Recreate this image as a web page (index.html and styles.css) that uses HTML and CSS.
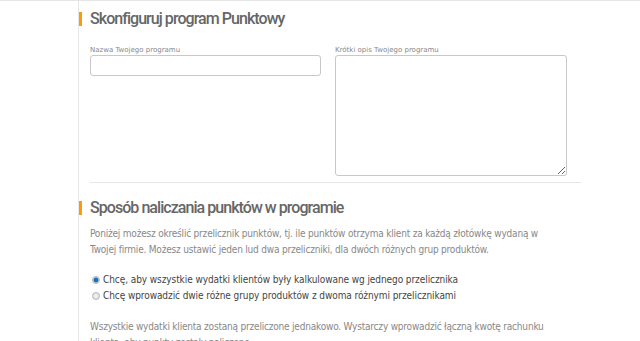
FILE: index.html
```html
<!DOCTYPE html>
<html lang="pl">

<head>
    <meta charset="UTF-8">
    <meta name="viewport" content="width=device-width, initial-scale=1.0">
    <title>Program Punktowy</title>
    <link rel="stylesheet" href="styles.css">
</head>

<body>
    <div class="page">
        <div class="side"></div>
        <div class="main">
            <h2 class="section-title">Skonfiguruj program Punktowy</h2>
            <div class="form-row">
                <div class="field">
                    <label for="name">Nazwa Twojego programu</label>
                    <input type="text" id="name">
                </div>
                <div class="field">
                    <label for="desc">Krótki opis Twojego programu</label>
                    <textarea id="desc"></textarea>
                </div>
            </div>
            <hr class="divider">
            <h2 class="section-title second">Sposób naliczania punktów w programie</h2>
            <p class="info">Poniżej możesz określić przelicznik punktów, tj. ile punktów otrzyma klient za każdą złotówkę wydaną w Twojej firmie. Możesz ustawić jeden lud dwa przeliczniki, dla dwóch różnych grup produktów.</p>
            <div class="options">
                <label class="option"><input type="radio" name="mode" checked>Chcę, aby wszystkie wydatki klientów były kalkulowane wg jednego przelicznika</label>
                <label class="option"><input type="radio" name="mode">Chcę wprowadzić dwie różne grupy produktów z dwoma różnymi przelicznikami</label>
            </div>
            <p class="info">Wszystkie wydatki klienta zostaną przeliczone jednakowo. Wystarczy wprowadzić łączną kwotę rachunku klienta, aby punkty zostały naliczone.</p>
        </div>
    </div>
</body>

</html>
```

FILE: styles.css
```css
body {
    margin: 0;
    font-family: "DejaVu Sans Condensed", "DejaVu Sans", Verdana, sans-serif;
    font-stretch: condensed;
    background-color: #fff;
    overflow: hidden;
}

.page {
    display: flex;
    border-top: 1px solid #e6e6e6;
    height: 340px;
}

.side {
    width: 78px;
    flex-shrink: 0;
}

.main {
    border-left: 1px solid #e6e6e6;
    padding-left: 11px;
    width: 491px;
}

.section-title {
    margin: 11px 0 0 -11px;
    padding-left: 8px;
    border-left: 3px solid #ff9a00;
    font-family: Roboto, sans-serif;
    font-stretch: normal;
    font-weight: 500;
    font-size: 16px;
    letter-spacing: -0.95px;
    line-height: 14px;
    height: 14px;
    color: #666;
}

.section-title.second {
    margin-top: 18px;
}

.form-row {
    display: flex;
    gap: 14px;
    margin-top: 20px;
}

.field label {
    display: block;
    font-family: "DejaVu Sans", Verdana, sans-serif;
    font-stretch: normal;
    font-size: 7px;
    line-height: 9px;
    color: #888;
}

.field input {
    width: 231px;
    height: 21px;
    box-sizing: border-box;
    border: 1px solid #c8c8c8;
    border-radius: 3px;
    display: block;
}

.field textarea {
    width: 232px;
    height: 121px;
    box-sizing: border-box;
    border: 1px solid #c8c8c8;
    border-radius: 3px;
    display: block;
}

.divider {
    border: none;
    border-top: 1px solid #e6e6e6;
    margin: 6px 0 0 0;
}

.info {
    font-size: 10px;
    letter-spacing: -0.2px;
    line-height: 16px;
    color: #888;
    margin: 11px 0 0 0;
    max-width: 470px;
}

.options {
    margin: 14px 0 15px 0;
}

.option {
    display: block;
    font-size: 10px;
    letter-spacing: -0.08px;
    line-height: 16px;
    color: #444;
}

.option input {
    appearance: none;
    margin: 0 3px 0 2px;
    width: 8px;
    height: 8px;
    border: 1px solid #b5b5b5;
    border-radius: 50%;
    background: radial-gradient(circle, #f4f4f4 0, #dcdcdc 100%);
    vertical-align: -1px;
}

.option input:checked {
    background: radial-gradient(circle, #1d6fb8 0, #1d6fb8 2px, #e8e8e8 3px, #d6d6d6 100%);
}
```
